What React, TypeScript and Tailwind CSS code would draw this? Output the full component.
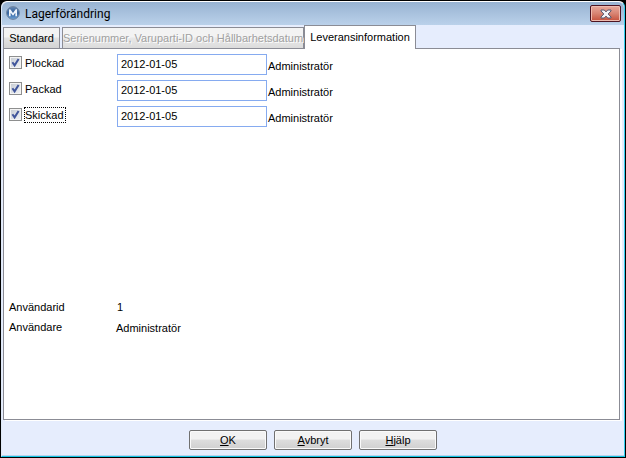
import { useState } from 'react'

const steps = [
  { id: 'plockad', label: 'Plockad', date: '2012-01-05', user: 'Administratör', focused: false },
  { id: 'packad', label: 'Packad', date: '2012-01-05', user: 'Administratör', focused: false },
  { id: 'skickad', label: 'Skickad', date: '2012-01-05', user: 'Administratör', focused: true },
]

const Logo = () => (
  <svg width="14" height="14" viewBox="0 0 14 14" aria-hidden="true">
    <defs>
      <linearGradient id="ball" x1="0" y1="0" x2="0" y2="1">
        <stop offset="0" stopColor="#6789b5" />
        <stop offset="0.5" stopColor="#2f5f9c" />
        <stop offset="1" stopColor="#6ea3d8" />
      </linearGradient>
    </defs>
    <circle cx="7" cy="7" r="6.4" fill="url(#ball)" stroke="#70859f" />
    <path d="M3.8 10.2 V4 L7 8.6 L10.2 4 V10.2" fill="none" stroke="#eef4fb" strokeWidth="1.7" strokeLinejoin="round" />
  </svg>
)

const CloseIcon = () => (
  <svg width="12" height="10" viewBox="0 0 12 10" aria-hidden="true">
    <path
      d="M1 1 H4.3 L6 2.9 L7.7 1 H11 V2 L8.2 5 L11 8 V9 H7.7 L6 7.1 L4.3 9 H1 V8 L3.8 5 L1 2 Z"
      fill="#f4f4f8"
      stroke="#56586e"
    />
  </svg>
)

const StepRow = ({ id, label, date, user, focused }: (typeof steps)[number]) => {
  const [checked, setChecked] = useState(true)
  const [value, setValue] = useState(date)

  return (
    <div className="flex h-[21px]">
      <div className="flex w-[108px] items-start pt-px">
        <span className="grid pt-px">
          <input
            id={id}
            type="checkbox"
            checked={checked}
            onChange={() => setChecked(!checked)}
            className="peer col-start-1 row-start-1 size-[13px] appearance-none border border-[#8e8f8f] bg-linear-to-br from-[#c4cad2] to-[#f4f5f7] outline-1 -outline-offset-2 outline-[#f4f4f4]"
          />
          <svg viewBox="0 0 13 13" className="pointer-events-none invisible col-start-1 row-start-1 size-[13px] peer-checked:visible" aria-hidden="true">
            <path d="M3.4 6.2 L5.6 9.4 L9.6 3" fill="none" stroke="#40559b" strokeWidth="2" />
          </svg>
        </span>
        <label
          htmlFor={id}
          className={focused ? 'ml-0.5 border border-dotted border-black pr-px leading-[14px]' : 'ml-0.5 border border-transparent pr-px leading-[14px]'}
        >
          {label}
        </label>
      </div>
      <input
        type="text"
        aria-label={label + ' datum'}
        value={value}
        onChange={(e) => setValue(e.target.value)}
        className="h-[21px] w-[150px] border border-[#86abf0] bg-white px-[3px] pb-0.5 outline-none"
      />
      <span className="ml-px pt-1 leading-4">{user}</span>
    </div>
  )
}

const dialogButton =
  'h-5 w-[78px] rounded-xs border border-[#707070] bg-linear-to-b from-[#f2f2f2] from-45% via-[#dddddd] via-50% to-[#d0d0d0] text-center leading-4 shadow-[inset_0_0_0_1px_#fafafa]'

const App = () => {
  return (
    <div className="flex min-h-screen bg-black p-px font-['Liberation_Sans',Arial,sans-serif] text-[11px] text-black">
      <main className="flex flex-1 flex-col rounded-t-md border border-t-white border-r-[#33cfee] border-b-[#12c4e4] border-l-[#dfe9f7] bg-[#e6edfd]">
        <header className="flex h-[23px] items-start rounded-t-md bg-linear-to-b from-[#98b3d2] to-[#bad1ea] pl-1">
          <span className="pt-1">
            <Logo />
          </span>
          <h1 className="ml-[5px] flex-1 pt-0.5 font-[Roboto,'Open_Sans',sans-serif] text-[12px] leading-5">Lagerförändring</h1>
          <button
            type="button"
            aria-label="Stäng"
            className="mt-[3px] mr-[3px] flex h-[17px] w-[31px] items-center justify-center rounded-xs border border-[#4d1422] bg-linear-to-b from-[#e8a99c] from-0% via-[#d88473] via-50% to-[#c5503b] shadow-[inset_0_0_0_1px_#eebbb0]"
          >
            <CloseIcon />
          </button>
        </header>

        <div role="tablist" className="flex h-[23px] items-end pl-px">
          <button
            role="tab"
            className="h-[21px] w-[57px] border border-b-0 border-[#8b8c95] bg-linear-to-b from-[#f3f3f3] from-45% via-[#e2e2e2] via-50% to-[#d3d3d3] pt-px text-center"
          >
            Standard
          </button>
          <button
            role="tab"
            disabled
            className="ml-0.5 h-[21px] w-[242px] flex-none border border-b-0 border-[#8b8c95] bg-linear-to-b from-[#f3f3f3] from-45% via-[#e8e8e8] via-50% to-[#dcdcdc] pt-px text-center whitespace-nowrap text-[#a0a0a0] [text-shadow:1px_1px_0_#fff]"
          >
            Serienummer, Varuparti-ID och Hållbarhetsdatum
          </button>
          <button role="tab" aria-selected="true" className="relative -mb-px h-6 w-[112px] border border-b-0 border-[#8b8c95] bg-white pb-px text-center">
            Leveransinformation
          </button>
        </div>

        <section role="tabpanel" className="mr-1 ml-px flex flex-1 flex-col border border-[#8b8c95] bg-white px-[5px] pt-[5px] shadow-[2px_1px_0_#fff]">
          <div className="flex flex-col gap-[5px]">
            {steps.map((step) => (
              <StepRow key={step.id} {...step} />
            ))}
          </div>
          <dl className="mt-[172px] grid grid-cols-[107px_1fr] gap-y-1 leading-4">
            <dt>Användarid</dt>
            <dd className="pl-px">1</dd>
            <dt>Användare</dt>
            <dd className="pt-px">Administratör</dd>
          </dl>
        </section>

        <footer className="flex h-9 items-start justify-center gap-[7px] border-b border-[#b9d3ec] pt-2.5">
          <button type="button" className={dialogButton}>
            <u>O</u>K
          </button>
          <button type="button" className={dialogButton}>
            <u>A</u>vbryt
          </button>
          <button type="button" className={dialogButton}>
            <u>H</u>jälp
          </button>
        </footer>
      </main>
    </div>
  )
}

export default App
